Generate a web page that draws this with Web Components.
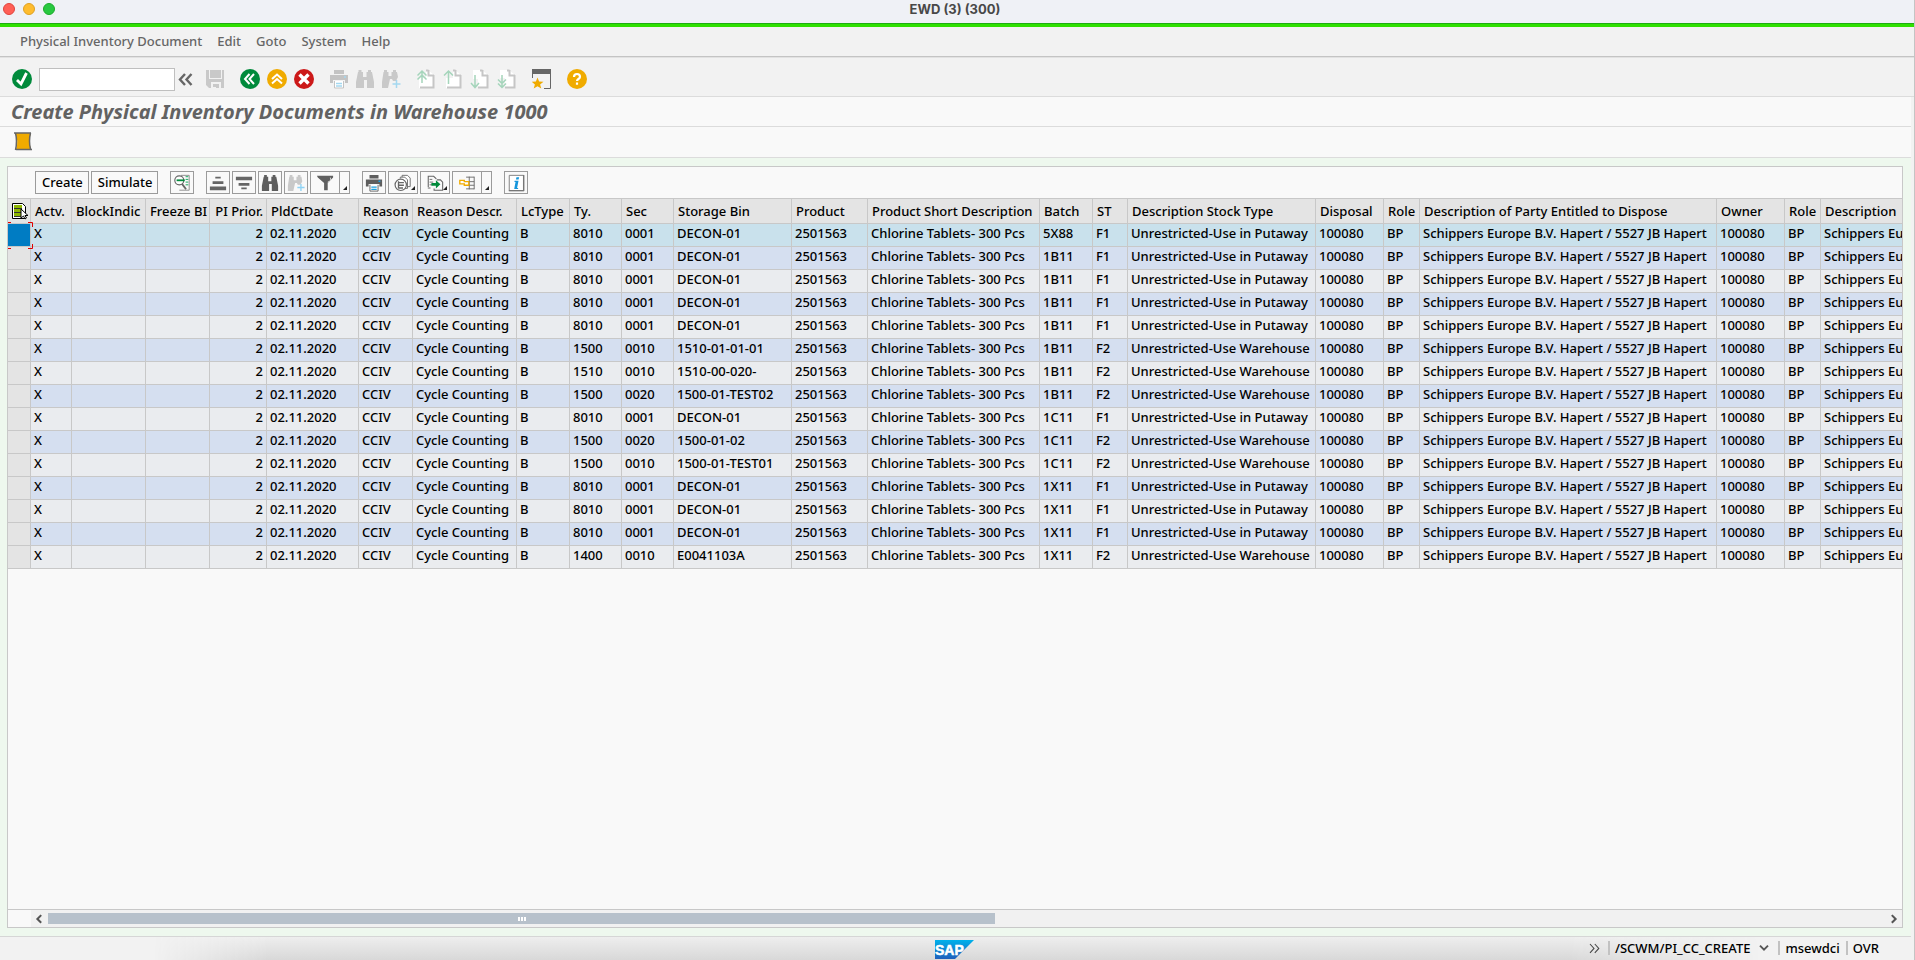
<!DOCTYPE html>
<html lang="en">
<head>
<meta charset="utf-8">
<title>EWD (3) (300)</title>
<style>
  html, body { height: 100%; margin: 0; }
  body { font: 500 13px/16px "Noto Sans", "Open Sans", sans-serif; color: #000; background: #f9f9f9; overflow: hidden; }
</style>
</head>
<body>
<gui-window>
  <title-bar slot="title">EWD (3) (300)</title-bar>
  <menu-bar slot="menu"></menu-bar>
  <system-toolbar slot="toolbar"></system-toolbar>
  <screen-title slot="heading">Create Physical Inventory Documents in Warehouse 1000</screen-title>
  <app-toolbar slot="app"></app-toolbar>
  <alv-panel slot="content">
    <alv-toolbar slot="tools"></alv-toolbar>
    <alv-grid slot="grid"></alv-grid>
    <grid-scrollbar slot="scroll"></grid-scrollbar>
  </alv-panel>
  <status-bar slot="status"></status-bar>
</gui-window>

<script>
const page = '<path d="M3 1h9l6 5v13H3z" fill="#fff"/><path d="M10 1.5h2.5M12.5 1v5.5H18M17.5 6v12.5H4" fill="none" stroke="#c6c6c6" stroke-width="2"/>';
const bino = c => `<path fill="${c}" d="M3.500 1h3v2h1.500v5h3.500V3h1.500V1h3v2h1l2 10v6h-7v-8h-3v8H1v-6L3 3h.5z"/>`;
const binoPlus = (c, p) => `<path fill="${c}" d="M3 1h3v2h1.500v4h3V3H12V1h3v2h1l1 5-2 4h-3l-1-2H9l-2 9H1v-6L2.500 3H3z"/><path d="M15.500 11v8M11.500 15h8" stroke="${p}" stroke-width="1.500"/>`;
const printer = (c, p) => `<path fill="${c}" d="M5 1h10v4H5zM1 6h18v8h-3v-3H4v3H1z"/><path d="M5.500 12v7h9v-7" fill="#fff" stroke="${c}"/><path d="M7 14.500h6M7 17h6M15 8h2" stroke="${p}" stroke-width="1.500"/>`;
const ICONS = {
  check: '<circle cx="10" cy="10" r="10" fill="#008a3b"/><path d="M5 11l4 4 5.500-11" fill="none" stroke="#fff" stroke-width="2.800"/>',
  save: '<path fill="#c9c9c9" d="M1 1h18v18H4l-3-3z"/><path fill="#f2f2f2" d="M4 0h1v9h11V0h1v10H4zM6 13h10v6h-2v-4h-3v4H6z"/><path d="M6.500 19.500v-6h9v6" fill="none" stroke="#f2f2f2"/><path fill="#f2f2f2" d="M6 13h9v1H6z"/><path fill="#c9c9c9" d="M8 15h3v3H8z"/>',
  back: '<circle cx="10" cy="10" r="10" fill="#008a3b"/><path d="M9.500 5L5 10l4.500 5M14 5l-4.500 5 4.500 5" fill="none" stroke="#fff" stroke-width="2"/>',
  exit: '<circle cx="10" cy="10" r="10" fill="#f0ab00"/><path d="M5 10l5-4.500 5 4.500M5 14.500L10 10l5 4.500" fill="none" stroke="#fff" stroke-width="2"/>',
  cancel: '<circle cx="10" cy="10" r="10" fill="#cc1919"/><path d="M5.500 5.500l9 9M14.500 5.500l-9 9" stroke="#fff" stroke-width="3.400"/>',
  print: printer('#c3c3c3', '#a4d8f0'),
  find: bino('#c9c9c9'),
  findNext: binoPlus('#c9c9c9', '#a4d8f0'),
  first: page + '<path d="M0 0h10v9H0z" fill="#f2f2f2"/><path d="M1.500 6.500L6 2l4.500 4.500M1.500 10.500L6 6l4.500 4.500M6 3v11" fill="none" stroke="#a5d5bb" stroke-width="1.500"/>',
  prev: page + '<path d="M0 0h10v9H0z" fill="#f2f2f2"/><path d="M1 6.500L5.500 2 10 6.500M5.500 3v12" fill="none" stroke="#a5d5bb" stroke-width="1.500"/>',
  next: page + '<path d="M0 10h8v10H0z" fill="#f2f2f2"/><path d="M1 14l4 4.500L9 14M5 6v12" fill="none" stroke="#a5d5bb" stroke-width="1.500"/>',
  last: page + '<path d="M0 9h8v11H0z" fill="#f2f2f2"/><path d="M1 10.500L5 14.500l4-4M1 14.500l4 4 4-4M5 6v12" fill="none" stroke="#a5d5bb" stroke-width="1.500"/>',
  session: '<path fill="#666" d="M0 0h19v5H0z"/><path d="M.5 5v4M18.500 5v14.500H12" fill="none" stroke="#666"/><path fill="#f0ab00" d="M5.500 8.500l1.600 4 4.400.2-3.400 2.800 1.200 4-3.800-2.300-3.800 2.300 1.200-4L-.5 12.700l4.400-.2z"/>',
  help: '<circle cx="10" cy="10" r="10" fill="#f0ab00"/><path d="M7 8q0-3 3-3t3 2.700c0 2.300-3 2.300-3 4.300M10 13.500v2.200" fill="none" stroke="#fff" stroke-width="2.200"/>',
  collapse: '<path d="M9 5l-5 5.500L9 16M15.500 5l-5 5.500 5 5.500" fill="none" stroke="#666" stroke-width="2.400"/>',
  scroll: '<path fill="#f0ab00" d="M2 2h16q-3 8 0 16H3q3-8-1-16z"/><path d="M1 2h17M2.500 2q2 8 0 17M17.500 2q-2 8 0 16M3 18.500h16" fill="none" stroke="#666" stroke-width="1.500"/>',
  detail: '<path d="M9 1.500h9V18H7" fill="none" stroke="#888"/><path d="M14 3h3M14 6h3M14 9h3M14 12h3" stroke="#00a050"/><circle cx="7" cy="7" r="5" fill="#fff" stroke="#666" stroke-width="1.300"/><path d="M4 7h9" stroke="#008a3b" stroke-width="2"/><path d="M10 11l4.500 6" stroke="#666" stroke-width="2"/>',
  asc: '<path fill="#666" d="M7 3h6v2H7zM4 8h12v3H4zM1 14h18v4H1z"/>',
  desc: '<path fill="#666" d="M1 3h18v4H1zM4 10h12v3H4zM7 15h6v2H7z"/>',
  gridFind: bino('#5e5e5e'),
  gridFindNext: binoPlus('#c9c9c9', '#8fd3f5'),
  filter: '<path fill="#606060" d="M1 2h18v2l-6 6v8H9v-8L2 4z"/><path d="M13 9q4-1 3-5" fill="none" stroke="#ddd"/>',
  gridPrint: printer('#5e5e5e', '#1ba0e0'),
  views: '<path d="M9 4V1.500h6l3 3V14h-3" fill="#fff" stroke="#666"/><path d="M7 5V3.500h5l3 3V16h-3" fill="#fff" stroke="#666"/><circle cx="7.500" cy="12" r="6.300" fill="#fff" stroke="#666" stroke-width="1.300"/><path d="M5 8v8M5 9.500h6M5 12.500h6M5 15.500h5" stroke="#666" stroke-width="1.500"/>',
  export: '<path d="M2.500 14.500v-12h6l3 3M2 15.500h3M12 6.500h4l2.500 2.500v9H9V16" fill="none" stroke="#666" stroke-width="1.200"/><path d="M4 6h3M4 9h4M4 12h3" stroke="#666"/><path fill="#008a3b" d="M6 10h5V7l5 4.500-5 4.500v-3H6z"/>',
  layout: '<path d="M9 3.500h9M9 8.500h9M9 12.500h9M9 16.500h9M12.500 3v14M18 3v14" fill="none" stroke="#666"/><path d="M2 7h5v1.500h5v4H7V11H2z" fill="#fff" stroke="#f0ab00" stroke-width="1.500"/>',
  info: '<path d="M2.500 1.500h16v17h-16z" fill="#fff" stroke="#777"/><path d="M18.500 1v18M2 18.500h17" stroke="#777" stroke-width="1.500"/><path fill="#1596dc" d="M10.500 3.500h3l-.6 2.500h-3zM8.500 7.500h4.300l-1.600 8h1.300l-.3 1.300H8l1.500-8H8.200z"/>',
  columns: '<path d="M2.500 2.500h10l3 3v12h-13z" fill="#fff" stroke="#000"/><path fill="#8db600" d="M4 4h8v3H4zM4 8h8v3H4zM4 12h7v3H4z"/><path d="M4 7.500h8M4 11.500h8M4 15.500h8" stroke="#333"/><path d="M11 8v9l2.500-2 1.500 3 1.500-1-1.500-2.500H18z" fill="#fff" stroke="#000"/>',
  chevron: '<path d="M5 7l5 5 5-5" fill="none" stroke="#555" stroke-width="2.400"/>',
  overflow: '<path d="M5 5l5 5.500L5 16M11 5l5 5.500-5 5.500" fill="none" stroke="#444" stroke-width="1.300"/>',
  left: '<path d="M12 6l-4.500 4.500L12 15" fill="none" stroke="#555" stroke-width="2.400"/>',
  right: '<path d="M8 6l4.500 4.500L8 15" fill="none" stroke="#555" stroke-width="2.400"/>'
};

function define(name, html, setup) {
  const template = document.createElement('template');
  template.innerHTML = html;
  customElements.define(name, class extends HTMLElement {
    constructor() {
      super();
      this.attachShadow({ mode: 'open' }).append(template.content.cloneNode(true));
    }
    connectedCallback() { if (setup) setup(this, this.shadowRoot); }
  });
}

define('gui-icon', `
  <style>
    :host { display: block; width: 20px; height: 20px; flex: none; }
    svg { display: block; width: 100%; height: 100%; }
  </style>
  <svg viewBox="0 0 20 20" aria-hidden="true"></svg>`,
  (el, root) => { root.querySelector('svg').innerHTML = ICONS[el.getAttribute('name')]; });

define('gui-window', `
  <style>
    :host { display: flex; flex-direction: column; height: 100vh; box-sizing: border-box; border-right: 1px solid #c4c4c4; background: #f2f2f2; }
    main { flex: 1; min-height: 0; display: flex; flex-direction: column; margin-right: 3px; background: #f9f9f9; }
    .work { flex: 1; min-height: 0; display: flex; flex-direction: column; padding: 8px 8px 8px 7px; background: #eef8ee; border-bottom: 1px solid #d6d6d6; }
  </style>
  <slot name="title"></slot>
  <slot name="menu"></slot>
  <slot name="toolbar"></slot>
  <main>
    <slot name="heading"></slot>
    <slot name="app"></slot>
    <div class="work"><slot name="content"></slot></div>
  </main>
  <slot name="status"></slot>`);

define('title-bar', `
  <style>
    :host { display: grid; grid-template-columns: 1fr auto 1fr; align-items: center; height: 23px; background: #eff1f6; border-bottom: 3px solid #2fe000; padding-bottom: 1px; box-shadow: inset 0 -1px #1fae12; }
    .lights { display: flex; gap: 8px; padding: 0 0 5px 3px; }
    i { width: 12px; height: 12px; border-radius: 50%; box-sizing: border-box; border: 1px solid #e0443e; background: #ff5f57; }
    i:nth-child(2) { background: #febc2e; border-color: #dea123; }
    i:nth-child(3) { background: #28c840; border-color: #1aab29; }
    span { font: bold 13px/16px Inter, "Noto Sans", sans-serif; color: #484848; padding: 0 4px 5px 0; }
  </style>
  <div class="lights"><i></i><i></i><i></i></div><span><slot></slot></span>`);

define('menu-bar', `
  <style>
    :host { display: block; border-bottom: 1px solid #c4c4c4; background: #f2f2f2; }
    nav { display: flex; gap: 15px; height: 29px; align-items: center; padding: 0 20px 2px; box-sizing: border-box; }
    a { color: #666; text-decoration: none; }
  </style>
  <nav><a href="#">Physical Inventory Document</a><a href="#">Edit</a><a href="#">Goto</a><a href="#">System</a><a href="#">Help</a></nav>`);

define('system-toolbar', `
  <style>
    :host { display: flex; align-items: center; gap: 15px; height: 40px; padding: 5px 12px 0; box-sizing: border-box; background: #f2f2f2; border-bottom: 1px solid #dcdcdc; box-shadow: inset 0 1px #e2e2e2; }
    div { display: flex; gap: 7px; align-items: center; }
    div.near { gap: 6px; }
    button { border: 0; padding: 0; margin: 0; background: none; }
    input { box-sizing: border-box; width: 136px; height: 23px; border: 1px solid #bfbfbf; background: #fff; padding: 0 4px; font: inherit; }
    .fold, .save { margin-left: -6px; }
  </style>
  <div><button aria-label="Enter"><gui-icon name="check"></gui-icon></button><input aria-label="Command field"><button class="fold" aria-label="Hide command field"><gui-icon name="collapse"></gui-icon></button></div>
  <button class="save" aria-label="Save"><gui-icon name="save"></gui-icon></button>
  <div><button aria-label="Back"><gui-icon name="back"></gui-icon></button><button aria-label="Exit"><gui-icon name="exit"></gui-icon></button><button aria-label="Cancel"><gui-icon name="cancel"></gui-icon></button></div>
  <div class="near"><button aria-label="Print"><gui-icon name="print"></gui-icon></button><button aria-label="Find"><gui-icon name="find"></gui-icon></button><button aria-label="Find next"><gui-icon name="findNext"></gui-icon></button></div>
  <div><button aria-label="First page"><gui-icon name="first"></gui-icon></button><button aria-label="Previous page"><gui-icon name="prev"></gui-icon></button><button aria-label="Next page"><gui-icon name="next"></gui-icon></button><button aria-label="Last page"><gui-icon name="last"></gui-icon></button></div>
  <button aria-label="New session"><gui-icon name="session"></gui-icon></button>
  <button aria-label="Help"><gui-icon name="help"></gui-icon></button>`);

define('screen-title', `
  <style>
    :host { display: block; border-bottom: 1px solid #dcdcdc; }
    h1 { margin: 0; padding: 0 11px; font: italic bold 20px/29px "Noto Sans", "Open Sans", sans-serif; color: #626262; white-space: nowrap; }
  </style>
  <h1><slot></slot></h1>`);

define('app-toolbar', `
  <style>
    :host { display: flex; align-items: center; height: 30px; padding: 0 13px; border-bottom: 1px solid #dcdcdc; }
    button { border: 0; padding: 0 0 2px; background: none; }
  </style>
  <button aria-label="Start"><gui-icon name="scroll"></gui-icon></button>`);

define('alv-panel', `
  <style>
    :host { flex: 1; min-height: 0; display: flex; flex-direction: column; border: 1px solid #c8c8c8; background: #f9f9f9; }
    .grid { flex: 1; min-height: 0; overflow: hidden; }
  </style>
  <slot name="tools"></slot>
  <div class="grid"><slot name="grid"></slot></div>
  <slot name="scroll"></slot>`);

define('tool-button', `
  <style>
    :host { display: flex; }
    button { box-sizing: border-box; position: relative; display: flex; align-items: center; height: 23px; margin: 0; padding: 0 2px; border: 1px solid #9b9b9b; background: #f9f9f9; color: #000; font: inherit; white-space: nowrap; }
    gui-icon { width: 18px; height: 18px; }
    :host([label]) button { padding: 0 5px 2px 6px; }
    :host([menu]) button, :host([split]) button { padding: 0 5px; }
    :host([menu]) button::after, .drop::after { content: ""; position: absolute; right: 2px; bottom: 3px; border: 2px solid; border-color: transparent #222 #222 transparent; }
    :host([split]) button.drop { width: 11px; padding: 0; margin-left: -1px; }
  </style>
  <button class="main"></button>`,
  (el, root) => {
    const button = root.querySelector('.main');
    const label = el.getAttribute('label');
    if (label) { button.textContent = label; return; }
    button.setAttribute('aria-label', el.title);
    const icon = document.createElement('gui-icon');
    icon.setAttribute('name', el.getAttribute('icon'));
    button.append(icon);
    if (el.hasAttribute('split')) {
      const drop = document.createElement('button');
      drop.className = 'drop';
      drop.setAttribute('aria-label', el.title + ' options');
      root.append(drop);
    }
  });

define('alv-toolbar', `
  <style>
    :host { display: flex; gap: 12px; padding: 4px 4px 4px 27px; }
    div { display: flex; gap: 2px; }
  </style>
  <div><tool-button label="Create"></tool-button><tool-button label="Simulate"></tool-button></div>
  <tool-button icon="detail" title="Details"></tool-button>
  <div><tool-button icon="asc" title="Sort ascending"></tool-button><tool-button icon="desc" title="Sort descending"></tool-button><tool-button icon="gridFind" title="Find"></tool-button><tool-button icon="gridFindNext" title="Find next"></tool-button><tool-button icon="filter" title="Filter" split></tool-button></div>
  <div><tool-button icon="gridPrint" title="Print"></tool-button><tool-button icon="views" title="Views" menu></tool-button><tool-button icon="export" title="Export" menu></tool-button><tool-button icon="layout" title="Layout" split></tool-button></div>
  <tool-button icon="info" title="Information"></tool-button>`);

const COLUMNS = [
  ['Actv.', 41], ['BlockIndic', 74], ['Freeze BI', 64], ['PI Prior.', 57], ['PldCtDate', 92], ['Reason', 54],
  ['Reason Descr.', 104], ['LcType', 53], ['Ty.', 52], ['Sec', 52], ['Storage Bin', 118], ['Product', 76],
  ['Product Short Description', 172], ['Batch', 53], ['ST', 35], ['Description Stock Type', 188], ['Disposal', 68],
  ['Role', 36], ['Description of Party Entitled to Dispose', 297], ['Owner', 68], ['Role', 36], ['Description', 0]
];
const ROWS = [
  ['8010', '0001', 'DECON-01', '5X88', 'F1'], ['8010', '0001', 'DECON-01', '1B11', 'F1'],
  ['8010', '0001', 'DECON-01', '1B11', 'F1'], ['8010', '0001', 'DECON-01', '1B11', 'F1'],
  ['8010', '0001', 'DECON-01', '1B11', 'F1'], ['1500', '0010', '1510-01-01-01', '1B11', 'F2'],
  ['1510', '0010', '1510-00-020-', '1B11', 'F2'], ['1500', '0020', '1500-01-TEST02', '1B11', 'F2'],
  ['8010', '0001', 'DECON-01', '1C11', 'F1'], ['1500', '0020', '1500-01-02', '1C11', 'F2'],
  ['1500', '0010', '1500-01-TEST01', '1C11', 'F2'], ['8010', '0001', 'DECON-01', '1X11', 'F1'],
  ['8010', '0001', 'DECON-01', '1X11', 'F1'], ['8010', '0001', 'DECON-01', '1X11', 'F1'],
  ['1400', '0010', 'E0041103A', '1X11', 'F2']
];
const PARTY = 'Schippers Europe B.V. Hapert / 5527 JB Hapert';

define('alv-grid', `
  <style>
    :host { display: block; }
    table { table-layout: fixed; width: 100%; border-collapse: separate; border-spacing: 0; }
    th, td { box-sizing: border-box; padding: 0 3px 4px; text-align: left; font-weight: 500; white-space: nowrap; overflow: hidden; border: 0 solid #c8c8c8; border-right-width: 1px; border-bottom-width: 1px; }
    thead th { height: 26px; border-top-width: 1px; background: #e4e4e4; padding: 0 4px; }
    tbody > tr > * { height: 23px; }
    tbody th { background: #e4e4e4; }
    tr > :last-child { border-right-width: 0; }
    td { background: #eaecef; }
    tr:nth-child(even) td { background: #d5dff0; }
    tr.current td { background: #c9e1ec; }
    tr > .num { text-align: right; padding-right: 3px; }
    thead .pick { padding: 0 2px; }
    .current th { position: relative; overflow: visible; background: #007cc3; }
    .current th svg { position: absolute; left: -2px; top: -2px; width: 27px; height: 27px; }
  </style>
  <table><colgroup><col style="width:23px"></colgroup><thead><tr><th class="pick"><gui-icon name="columns"></gui-icon></th></tr></thead><tbody></tbody></table>`,
  (el, root) => {
    const cols = root.querySelector('colgroup');
    const head = root.querySelector('thead tr');
    const body = root.querySelector('tbody');
    COLUMNS.forEach(([name, width], i) => {
      const col = document.createElement('col');
      if (width) col.style.width = width + 'px';
      cols.append(col);
      const th = document.createElement('th');
      th.scope = 'col';
      th.textContent = name;
      if (i === 3) th.className = 'num';
      head.append(th);
    });
    ROWS.forEach(([type, sec, bin, batch, st], r) => {
      const tr = body.insertRow();
      const th = document.createElement('th');
      th.scope = 'row';
      tr.append(th);
      if (r === 0) {
        tr.className = 'current';
        th.innerHTML = '<svg viewBox="0 0 27 27" aria-hidden="true"><path d="M.5 5V.5H5M22 .5h4.500V5M.5 22v4.500H5M22 26.500h4.500V22" fill="none" stroke="#e00000"/></svg>';
      }
      const stock = st === 'F1' ? 'Unrestricted-Use in Putaway' : 'Unrestricted-Use Warehouse';
      ['X', '', '', '2', '02.11.2020', 'CCIV', 'Cycle Counting', 'B', type, sec, bin, '2501563',
        'Chlorine Tablets- 300 Pcs', batch, st, stock, '100080', 'BP', PARTY, '100080', 'BP', PARTY
      ].forEach((text, i) => {
        const td = tr.insertCell();
        td.textContent = text;
        if (i === 3) td.className = 'num';
      });
    });
  });

define('grid-scrollbar', `
  <style>
    :host { display: flex; height: 17px; padding-left: 23px; border-top: 1px solid #c8c8c8; }
    .bar { flex: 1; display: flex; align-items: center; background: #f1f1f1; }
    button { border: 0; padding: 0; width: 17px; height: 17px; background: none; }
    gui-icon { width: 17px; height: 17px; }
    .thumb { flex: 947; height: 11px; background: #b7c1cb; display: flex; gap: 1px; align-items: center; justify-content: center; }
    .thumb i { width: 2px; height: 4px; background: #fff; }
    .rest { flex: 890; }
  </style>
  <div class="bar"><button aria-label="Scroll left"><gui-icon name="left"></gui-icon></button><div class="thumb"><i></i><i></i><i></i></div><div class="rest"></div><button aria-label="Scroll right"><gui-icon name="right"></gui-icon></button></div>`);

define('status-bar', `
  <style>
    :host { display: grid; grid-template-columns: 1fr auto 1fr; align-items: center; height: 23px; position: relative; background: #f2f2f2; }
    :host::before { content: ""; position: absolute; inset: 0; background: linear-gradient(#eee, #d8d8d8); -webkit-mask: linear-gradient(90deg, transparent 8%, #000 14%, #000 82%, transparent 92%); mask: linear-gradient(90deg, transparent 8%, #000 14%, #000 82%, transparent 92%); }
    .logo { grid-column: 2; display: block; width: 40px; height: 20px; position: relative; padding: 0 4px 0 0; }
    .info { position: relative; display: flex; align-items: center; justify-content: flex-end; gap: 6px; padding: 0 35px 2px 0; }
    .first, .sys, .mode { white-space: nowrap; border-left: 2px solid #c2c2c2; padding-left: 5px; line-height: 14px; }
    button { border: 0; padding: 0; background: none; }
    gui-icon { width: 16px; height: 16px; }
  </style>
  <svg class="logo" viewBox="0 0 40 20" role="img" aria-label="SAP">
    <defs><linearGradient id="g" x2="0" y2="1"><stop offset="0" stop-color="#00b1eb"/><stop offset="1" stop-color="#1e5fbb"/></linearGradient></defs>
    <path d="M0 1h39L20 20H0z" fill="url(#g)"/>
    <text x="0" y="16" fill="#fff" stroke="#fff" stroke-width=".5" font-family="Liberation Sans, sans-serif" font-weight="bold" font-size="14">SAP</text>
  </svg>
  <div class="info"><button aria-label="Show status fields"><gui-icon name="overflow"></gui-icon></button><span class="first">/SCWM/PI_CC_CREATE</span><button aria-label="Choose system information"><gui-icon name="chevron"></gui-icon></button><span class="sys">msewdci</span><span class="mode">OVR</span></div>`);
</script>
</body>
</html>
